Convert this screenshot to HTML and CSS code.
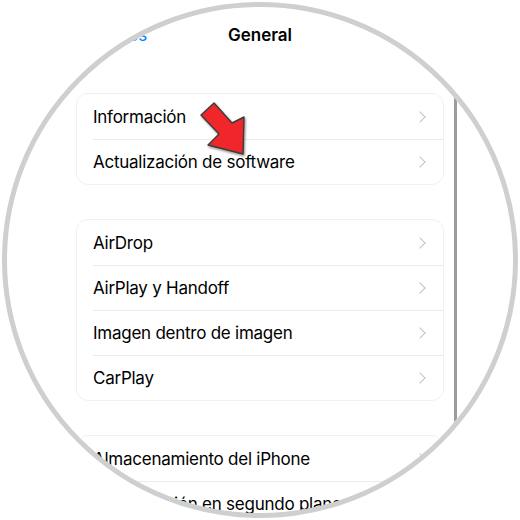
FILE: index.html
```html
<!doctype html>
<html lang="es">
<head>
    <meta charset="UTF-8">
    <title>General</title>
    <link rel="stylesheet" href="styles.css">
</head>
<body>
    <div class="lens">
        <div class="screen">
            <div class="navbar">
                <span class="back">
                    <svg width="12" height="20" viewBox="0 0 12 20"><path d="M10 2 L2 10 L10 18" fill="none" stroke="#007aff" stroke-width="2.6" stroke-linecap="round" stroke-linejoin="round"/></svg>
                    Ajustes
                </span>
                <span class="title">General</span>
            </div>

            <div class="group">
                <div class="row"><span>Información</span><i class="chev"></i></div>
                <div class="row"><span>Actualización de software</span><i class="chev"></i></div>
            </div>

            <div class="group">
                <div class="row"><span>AirDrop</span><i class="chev"></i></div>
                <div class="row"><span>AirPlay y Handoff</span><i class="chev"></i></div>
                <div class="row"><span>Imagen dentro de imagen</span><i class="chev"></i></div>
                <div class="row"><span>CarPlay</span><i class="chev"></i></div>
            </div>

            <div class="group">
                <div class="row"><span>Almacenamiento del iPhone</span><i class="chev"></i></div>
                <div class="row"><span>Actualización en segundo plano</span><i class="chev"></i></div>
            </div>
        </div>

        <!-- indicador de scroll -->
        <div class="scroll"></div>

        <!-- flecha roja -->
        <svg class="arrow" width="56" height="66" viewBox="196 98 56 66">
            <defs>
                <filter id="sh" x="-30%" y="-30%" width="160%" height="160%">
                    <feDropShadow dx="1" dy="1.5" stdDeviation="1.2" flood-color="#000" flood-opacity="0.45"/>
                </filter>
            </defs>
            <polygon points="201,115 214,103 232,123 244,117 243,154 208,145 219,134" fill="#f0282b" stroke="#3b3b3b" stroke-width="1.4" stroke-linejoin="round" filter="url(#sh)"/>
        </svg>
    </div>
</body>
</html>
```

FILE: styles.css
```css
*{
    margin:0;
    padding:0;
    box-sizing: border-box;
}
body{
    background-color: #fff;
    font-family: Inter, "Noto Sans", sans-serif;
    color:#000;
}
.lens{
    position: relative;
    width:516px;
    height:516px;
    margin:2px;
    border:5px solid #cfcfcf;
    border-radius: 50%;
    overflow: hidden;
    background-color: #fff;
}
.navbar{
    position: relative;
    height:56px;
    display:flex;
    align-items: center;
    justify-content: center;
}
.title{
    font-size: 17px;
    font-weight: 600;
}
.back{
    position: absolute;
    left:64px;
    top:0;
    height:56px;
    display:flex;
    align-items: center;
    gap:5px;
    color:#007aff;
    font-size: 17px;
}
.group{
    margin:30px 69px 0;
    border:1px solid #f0f0f3;
    border-radius: 12px;
    padding-left:16px;
}
.group + .group{
    margin-top:34px;
}
.row{
    height:45px;
    display:flex;
    align-items: center;
    justify-content: space-between;
    padding-right:16px;
    font-size: 17px;
    letter-spacing: -0.25px;
}
.row + .row{
    border-top:1px solid #ebebef;
}
.chev{
    width:8px;
    height:8px;
    border-top:1.4px solid #c2c2c6;
    border-right:1.4px solid #c2c2c6;
    transform: rotate(45deg);
    margin-right:3px;
}
.scroll{
    position: absolute;
    left:447px;
    top:88px;
    width:3px;
    height:327px;
    background-color: #9c9c9c;
}
.arrow{
    position: absolute;
    left:189px;
    top:91px;
}
```
